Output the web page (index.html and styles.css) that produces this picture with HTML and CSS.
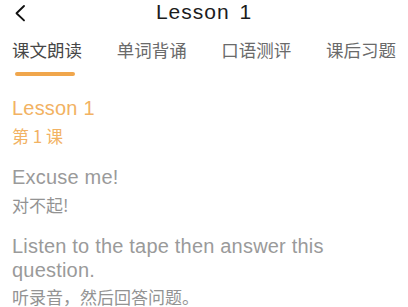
FILE: index.html
```html
<!DOCTYPE html>
<html lang="zh">
<head>
<meta charset="utf-8">
<link rel="stylesheet" href="styles.css">
</head>
<body>
<div class="page">
  <header class="nav">
    <div class="back">
      <svg width="12" height="18" viewBox="0 0 12 18"><path d="M10 2 L2.5 9.2 L10 16.4" fill="none" stroke="#111" stroke-width="1.9" stroke-linecap="round" stroke-linejoin="round"/></svg>
    </div>
    <div class="title">Lesson 1</div>
    <div></div>
  </header>
  <nav class="tabs">
    <div class="tab active"><span class="tab-label">课文朗读</span><span class="indicator"></span></div>
    <div class="tab"><span class="tab-label">单词背诵</span></div>
    <div class="tab"><span class="tab-label">口语测评</span></div>
    <div class="tab"><span class="tab-label">课后习题</span></div>
  </nav>
  <main class="content">
    <div class="group">
      <div class="en accent">Lesson 1</div>
      <div class="zh accent">第 1 课</div>
    </div>
    <div class="group">
      <div class="en">Excuse me!</div>
      <div class="zh">对不起!</div>
    </div>
    <div class="group">
      <div class="en">Listen to the tape then answer this question.</div>
      <div class="zh">听录音，然后回答问题。</div>
    </div>
  </main>
</div>
</body>
</html>
```

FILE: styles.css
```css
html, body {
  margin: 0;
  padding: 0;
  background: #ffffff;
}

.page {
  width: 408px;
  height: 307px;
  overflow: hidden;
  font-family: "Liberation Sans", "Noto Sans CJK SC", sans-serif;
}

.nav {
  display: grid;
  grid-template-columns: 1fr auto 1fr;
  align-items: center;
  height: 24px;
}

.back {
  display: flex;
  align-items: center;
  padding-left: 14px;
  height: 24px;
}

.back svg {
  display: block;
  margin-top: 1px;
}

.title {
  font-size: 21px;
  line-height: 24px;
  letter-spacing: 1px;
  word-spacing: 3px;
  color: #1c1c1c;
}

.tabs {
  display: flex;
  justify-content: space-between;
  padding: 0 12px;
  margin-top: 14px;
}

.tab {
  display: flex;
  flex-direction: column;
  align-items: flex-start;
}

.tab-label {
  font-family: "Noto Sans CJK SC", sans-serif;
  font-size: 17.5px;
  line-height: 24px;
  color: #6a6a6a;
}

.tab.active .tab-label {
  color: #474747;
}

.indicator {
  display: block;
  width: 60px;
  height: 4px;
  border-radius: 2px;
  background: #f0a64c;
  margin-top: 10px;
  margin-left: 3px;
}

.content {
  padding: 19.5px 12px 0;
  display: flex;
  flex-direction: column;
  gap: 17px;
}

.group {
  display: flex;
  flex-direction: column;
  gap: 4px;
}

.en {
  font-size: 20px;
  line-height: 24px;
  letter-spacing: 0.2px;
  color: #9a9a9a;
}

.zh {
  font-family: "Noto Sans CJK SC", sans-serif;
  font-size: 17px;
  line-height: 24px;
  color: #939393;
}

.group:last-child .zh {
  line-height: 22px;
}

.accent {
  color: #f2b263;
}
```
